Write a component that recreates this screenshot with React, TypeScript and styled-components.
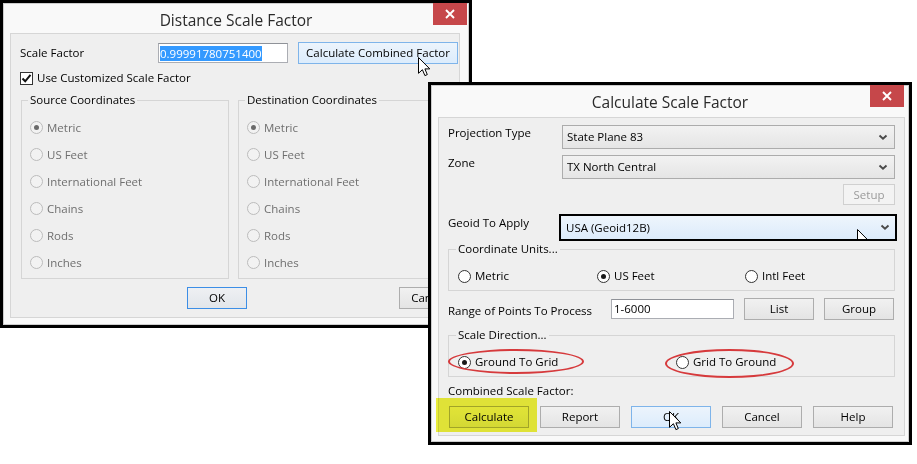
import React from "react";
import styled, { createGlobalStyle, css } from "styled-components";

const GlobalStyle = createGlobalStyle`
  html, body { margin: 0; padding: 0; background: #fff; }
  body {
    font-family: "Open Sans", "Noto Sans", sans-serif;
    font-size: 11.5px;
    color: #000;
  }
  * { box-sizing: border-box; }
`;

const Stage = styled.div`
  position: relative;
  width: 917px;
  height: 464px;
  overflow: hidden;
  background: #fff;
`;

const Window = styled.div<{ $x: number; $y: number; $w: number; $h: number }>`
  position: absolute;
  left: ${(p) => p.$x}px;
  top: ${(p) => p.$y}px;
  width: ${(p) => p.$w}px;
  height: ${(p) => p.$h}px;
  border: 3px solid #000;
  background: #f9f9f9;
  box-shadow: inset 0 0 0 1px #cdcdcd;
  display: flex;
  flex-direction: column;
`;

const TitleBar = styled.div<{ $h: number }>`
  flex: none;
  height: ${(p) => p.$h}px;
  display: grid;
  grid-template-columns: 1fr auto 1fr;
`;

const TitleText = styled.div`
  grid-column: 2;
  padding-top: 7px;
  line-height: 20px;
  font-size: 15.5px;
  color: #2a2a2a;
  white-space: nowrap;
`;

const CloseButton = styled.div<{ $right: number }>`
  grid-column: 3;
  justify-self: end;
  width: 34px;
  height: 22px;
  margin-right: ${(p) => p.$right}px;
  background: #c6474a;
  display: flex;
  align-items: center;
  justify-content: center;
`;

const Client = styled.div<{ $m: string }>`
  position: relative;
  flex: 1;
  margin: ${(p) => p.$m};
  background: #efefef;
  border: 1px solid #d6d6d6;
  display: flex;
  flex-direction: column;
`;

const Label = styled.span<{ $disabled?: boolean; $pt?: number }>`
  line-height: 16px;
  white-space: nowrap;
  padding-top: ${(p) => p.$pt ?? 0}px;
  color: ${(p) => (p.$disabled ? "#6f6f6f" : "#000")};
`;

const TextBox = styled.div`
  height: 20px;
  border: 1px solid #abadb3;
  border-top-color: #8f9298;
  background: #fff;
  display: flex;
  align-items: center;
  padding-left: 2px;
  line-height: 16px;
  white-space: nowrap;
  overflow: hidden;
`;

const Selection = styled.span`
  background: #3399ff;
  color: #fff;
  line-height: 15px;
  margin-left: -1px;
`;

type Variant = "normal" | "hover" | "default" | "disabled";

const Button = styled.div<{ $w: number; $h?: number; $variant?: Variant }>`
  width: ${(p) => p.$w}px;
  height: ${(p) => p.$h ?? 22}px;
  border: 1px solid #adadad;
  background: linear-gradient(#f1f1f1, #e4e4e4);
  display: flex;
  align-items: center;
  justify-content: center;
  line-height: 16px;
  white-space: nowrap;
  ${(p) =>
    p.$variant === "hover" &&
    css`
      border-color: #7eb4ea;
      background: linear-gradient(#ecf4fc, #dcecfc);
    `}
  ${(p) =>
    p.$variant === "default" &&
    css`
      border-color: #3c8ee6;
      background: linear-gradient(#eef0f3, #e2e6ea);
    `}
  ${(p) =>
    p.$variant === "disabled" &&
    css`
      border-color: #d0d0d0;
      background: #f3f3f3;
      color: #9a9a9a;
    `}
`;

const Highlighted = styled.span`
  position: relative;
  display: inline-flex;
  &::after {
    content: "";
    position: absolute;
    inset: -8px -8px -4px -13px;
    background: #eef23a;
    mix-blend-mode: multiply;
    pointer-events: none;
  }
`;

const CheckRow = styled.label`
  display: flex;
  align-items: center;
  gap: 4px;
  margin-top: 6px;
  padding-left: 9px;
`;

const CheckBox = styled.span`
  width: 13px;
  height: 13px;
  border: 1px solid #333;
  background: #fff;
  display: flex;
  align-items: center;
  justify-content: center;
`;

const Group = styled.fieldset<{ $w: number; $pad: string }>`
  margin: 0;
  min-inline-size: 0;
  width: ${(p) => p.$w}px;
  padding: ${(p) => p.$pad};
  border: 1px solid #d5d5d5;
`;

const Legend = styled.legend`
  padding: 0 2px;
  margin-left: -2px;
  line-height: 16px;
  white-space: nowrap;
`;

const RadioList = styled.div`
  display: flex;
  flex-direction: column;
`;

const RadioGrid = styled.div<{ $cols: string }>`
  display: grid;
  grid-template-columns: ${(p) => p.$cols};
`;

const RadioItem = styled.label<{ $h: number }>`
  position: relative;
  display: flex;
  align-items: center;
  gap: 4px;
  height: ${(p) => p.$h}px;
`;

const RadioCircle = styled.span<{ $checked?: boolean; $disabled?: boolean }>`
  flex: none;
  width: 13px;
  height: 13px;
  border-radius: 50%;
  border: 1px solid ${(p) => (p.$disabled ? "#bcbcbc" : "#333")};
  background: ${(p) => (p.$disabled ? "#f2f2f2" : "#fff")};
  display: flex;
  align-items: center;
  justify-content: center;
  &::after {
    content: "";
    display: ${(p) => (p.$checked ? "block" : "none")};
    width: 5px;
    height: 5px;
    border-radius: 50%;
    background: ${(p) => (p.$disabled ? "#6a6a6a" : "#1a1a1a")};
  }
`;

const Ellipse = styled.span<{ $l: number; $t: number; $w: number; $h: number }>`
  position: absolute;
  left: ${(p) => p.$l}px;
  top: ${(p) => p.$t}px;
  width: ${(p) => p.$w}px;
  height: ${(p) => p.$h}px;
  border: 2.5px solid #d63a3c;
  border-radius: 50%;
  pointer-events: none;
`;

/* dialog 1 */
const FactorRow = styled.div`
  display: grid;
  grid-template-columns: 128px 130px 160px;
  column-gap: 10px;
  align-items: center;
  margin-top: 8px;
  padding-left: 9px;
`;

const GroupRow = styled.div`
  display: flex;
  gap: 9px;
  margin-top: 6px;
  padding-left: 10px;
`;

const DialogButtons = styled.div<{ $pl: number; $gap: number; $mt: number }>`
  display: flex;
  gap: ${(p) => p.$gap}px;
  padding-left: ${(p) => p.$pl}px;
  margin-top: ${(p) => p.$mt}px;
`;

/* dialog 2 */
const Form = styled.div`
  display: flex;
  flex-direction: column;
  padding: 0 8px 0 9px;
`;

const FieldRow = styled.div<{ $cols: string; $mt: number; $align?: string }>`
  display: grid;
  grid-template-columns: ${(p) => p.$cols};
  column-gap: 10px;
  align-items: ${(p) => p.$align ?? "start"};
  margin-top: ${(p) => p.$mt}px;
`;

const Combo = styled.div<{ $focused?: boolean }>`
  position: relative;
  height: 24px;
  border: 1px solid #acacac;
  background: linear-gradient(#f2f2f2, #e5e5e5);
  display: flex;
  align-items: center;
  justify-content: space-between;
  padding: 0 6px 0 4px;
  line-height: 16px;
  white-space: nowrap;
  overflow: hidden;
  ${(p) =>
    p.$focused &&
    css`
      height: 27px;
      margin-left: -3px;
      margin-right: -2px;
      border: 2px solid #000;
      background: linear-gradient(#eef5fc, #dcebfb);
      padding: 0 5px 0 5px;
    `}
`;

const SetupRow = styled.div`
  display: flex;
  justify-content: flex-end;
  margin-top: 5px;
  padding-right: 1px;
`;

const Caption = styled.div<{ $mt: number }>`
  margin-top: ${(p) => p.$mt}px;
  line-height: 16px;
`;

const CursorSpot = styled.div<{ $x: number; $y: number }>`
  position: absolute;
  left: ${(p) => p.$x}px;
  top: ${(p) => p.$y}px;
  z-index: 10;
  line-height: 0;
  pointer-events: none;
`;

const Chevron = () => (
  <svg width="10" height="7" viewBox="0 0 10 7">
    <path d="M1.5 1.5 L5 4.8 L8.5 1.5" fill="none" stroke="#4a4a4a" strokeWidth="1.9" />
  </svg>
);

const CloseGlyph = () => (
  <svg width="10" height="10" viewBox="0 0 10 10">
    <path d="M1 1 L9 9 M9 1 L1 9" stroke="#fff" strokeWidth="1.9" />
  </svg>
);

const CheckGlyph = () => (
  <svg width="11" height="11" viewBox="0 0 11 11">
    <path d="M1.5 5.5 L4.2 8.3 L9.5 1.8" fill="none" stroke="#111" strokeWidth="2" />
  </svg>
);

const CursorIcon = () => (
  <svg width="13" height="20" viewBox="0 0 13 20">
    <path
      d="M0.5 0.5 V16.3 L4.4 12.7 L6.9 18.6 L9.3 17.6 L6.9 11.9 H11.8 Z"
      fill="#fff"
      stroke="#000"
      strokeWidth="1"
      strokeLinejoin="round"
    />
  </svg>
);

const units = ["Metric", "US Feet", "International Feet", "Chains", "Rods", "Inches"];

const UnitGroup = ({ title }: { title: string }) => (
  <Group $w={208} $pad="6px 0 2px 8px">
    <Legend>{title}</Legend>
    <RadioList>
      {units.map((u, i) => (
        <RadioItem key={u} $h={27}>
          <RadioCircle $disabled $checked={i === 0} />
          <Label $disabled>{u}</Label>
        </RadioItem>
      ))}
    </RadioList>
  </Group>
);

export default function App() {
  return (
    <Stage>
      <GlobalStyle />

      <Window $x={0} $y={0} $w={472} $h={328}>
        <TitleBar $h={30}>
          <TitleText>Distance Scale Factor</TitleText>
          <CloseButton $right={2}>
            <CloseGlyph />
          </CloseButton>
        </TitleBar>
        <Client $m="0 9px 7px 7px">
          <FactorRow>
            <Label>Scale Factor</Label>
            <TextBox>
              <Selection>0.99991780751400</Selection>
            </TextBox>
            <Button $w={160} $variant="hover">
              Calculate Combined Factor
            </Button>
          </FactorRow>
          <CheckRow>
            <CheckBox>
              <CheckGlyph />
            </CheckBox>
            <Label>Use Customized Scale Factor</Label>
          </CheckRow>
          <GroupRow>
            <UnitGroup title="Source Coordinates" />
            <UnitGroup title="Destination Coordinates" />
          </GroupRow>
          <DialogButtons $pl={176} $gap={152} $mt={8}>
            <Button $w={60} $variant="default">
              OK
            </Button>
            <Button $w={60}>Cancel</Button>
          </DialogButtons>
        </Client>
      </Window>

      <Window $x={428} $y={82} $w={484} $h={363}>
        <TitleBar $h={32}>
          <TitleText>Calculate Scale Factor</TitleText>
          <CloseButton $right={5}>
            <CloseGlyph />
          </CloseButton>
        </TitleBar>
        <Client $m="0 4px 6px 7px">
          <Form>
            <FieldRow $cols="104px 333px" $mt={7}>
              <Label>Projection Type</Label>
              <Combo>
                <span>State Plane 83</span>
                <Chevron />
              </Combo>
            </FieldRow>
            <FieldRow $cols="104px 333px" $mt={6}>
              <Label>Zone</Label>
              <Combo>
                <span>TX North Central</span>
                <Chevron />
              </Combo>
            </FieldRow>
            <SetupRow>
              <Button $w={52} $h={21} $variant="disabled">
                Setup
              </Button>
            </SetupRow>
            <FieldRow $cols="104px 333px" $mt={9}>
              <Label $pt={1}>Geoid To Apply</Label>
              <Combo $focused>
                <span>USA (Geoid12B)</span>
                <Chevron />
                <CursorSpot $x={296} $y={13}>
                  <CursorIcon />
                </CursorSpot>
              </Combo>
            </FieldRow>
            <Group $w={447} $pad="11px 0 6px 9px">
              <Legend>Coordinate Units...</Legend>
              <RadioGrid $cols="139px 148px auto">
                <RadioItem $h={16}>
                  <RadioCircle />
                  <Label>Metric</Label>
                </RadioItem>
                <RadioItem $h={16}>
                  <RadioCircle $checked />
                  <Label>US Feet</Label>
                </RadioItem>
                <RadioItem $h={16}>
                  <RadioCircle />
                  <Label>Intl Feet</Label>
                </RadioItem>
              </RadioGrid>
            </Group>
            <FieldRow $cols="153px 123px 70px 70px" $mt={7} $align="center">
              <Label $pt={4}>Range of Points To Process</Label>
              <TextBox>1-6000</TextBox>
              <Button $w={70}>List</Button>
              <Button $w={70}>Group</Button>
            </FieldRow>
            <Caption $mt={7}>
              <Group $w={447} $pad="11px 0 6px 9px">
                <Legend>Scale Direction...</Legend>
                <RadioGrid $cols="218px auto">
                  <RadioItem $h={16}>
                    <RadioCircle $checked />
                    <Label>Ground To Grid</Label>
                    <Ellipse $l={-10} $t={-5} $w={136} $h={25} />
                  </RadioItem>
                  <RadioItem $h={16}>
                    <RadioCircle />
                    <Label>Grid To Ground</Label>
                    <Ellipse $l={-11} $t={-5} $w={129} $h={29} />
                  </RadioItem>
                </RadioGrid>
              </Group>
            </Caption>
            <Caption $mt={6}>Combined Scale Factor:</Caption>
            <DialogButtons $pl={1} $gap={11} $mt={7}>
              <Highlighted>
                <Button $w={80}>Calculate</Button>
              </Highlighted>
              <Button $w={80}>Report</Button>
              <Button $w={80} $variant="hover">
                OK
              </Button>
              <Button $w={80}>Cancel</Button>
              <Button $w={80}>Help</Button>
            </DialogButtons>
          </Form>
        </Client>
      </Window>

      <CursorSpot $x={418} $y={57}>
        <CursorIcon />
      </CursorSpot>
      <CursorSpot $x={669} $y={411}>
        <CursorIcon />
      </CursorSpot>
    </Stage>
  );
}
